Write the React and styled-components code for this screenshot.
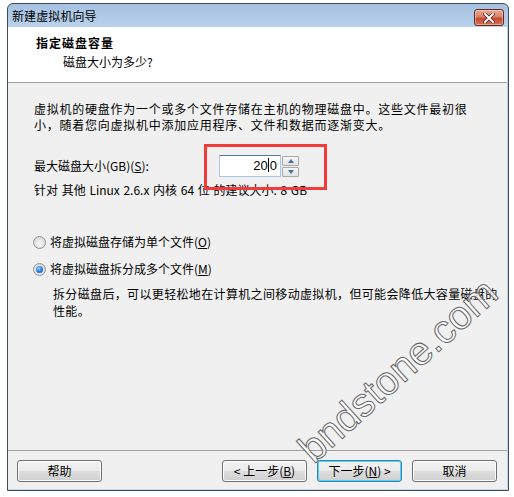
import React from "react";
import styled, { createGlobalStyle } from "styled-components";

const Global = createGlobalStyle`
  html, body { margin: 0; padding: 0; background: #ffffff; }
  body {
    font-family: "Noto Sans CJK SC", "Liberation Sans", sans-serif;
    font-size: 12px;
    color: #000;
  }
`;

const Page = styled.div`
  width: 514px;
  height: 497px;
  padding: 3px 0 0 7px;
  box-sizing: border-box;
  overflow: hidden;
`;

const Window = styled.div`
  position: relative;
  width: 502px;
  height: 488px;
  box-sizing: border-box;
  border: 1px solid #3f4a57;
  border-radius: 6px 6px 0 0;
  background: linear-gradient(180deg, #a6c1e1 0px, #bad2ec 24px, #c4d9f0 100%);
  display: flex;
  flex-direction: column;
  padding-bottom: 1px;
  overflow: hidden;
`;

const TitleBar = styled.div`
  height: 23px;
  flex: none;
  display: flex;
  align-items: center;
  justify-content: space-between;
  padding: 0 4px 0 4px;
`;

const Title = styled.span`
  font-size: 12px;
  line-height: 14px;
  color: #000;
  letter-spacing: 0.1px;
`;

const CloseButton = styled.div`
  width: 30px;
  height: 17px;
  box-sizing: border-box;
  border: 1px solid #5e2a22;
  border-radius: 3px;
  background: linear-gradient(180deg, #e9ab99 0%, #d9806a 45%, #c44b31 55%, #d4735c 100%);
  display: flex;
  align-items: center;
  justify-content: center;
  margin-top: 4px;
  box-shadow: inset 0 0 0 1px rgba(255, 220, 210, 0.5);
`;

const Client = styled.div`
  flex: 1;
  display: flex;
  flex-direction: column;
  background: #f0f0f0;
  margin: 0 1px 0 0;
`;

const Header = styled.div`
  height: 55px;
  flex: none;
  background: #ffffff;
  border-bottom: 1px solid #a0a0a0;
  box-sizing: content-box;
  padding: 0 0 0 28px;
`;

const HeaderTitle = styled.div`
  font-weight: bold;
  font-size: 12px;
  line-height: 16px;
  padding-top: 8px;
  letter-spacing: 1px;
`;

const HeaderSub = styled.div`
  font-size: 12px;
  line-height: 16px;
  padding: 3px 0 0 27px;
`;

const Body = styled.div`
  flex: 1;
  padding: 18px 0 0 26px;
  display: flex;
  flex-direction: column;
`;

const Paragraph = styled.p`
  margin: 0;
  font-size: 12px;
  letter-spacing: 0.75px;
  line-height: 16px;
  width: 440px;
`;

const SizeRow = styled.div`
  margin-top: 22px;
  height: 22px;
  display: flex;
  align-items: center;
`;

const Label = styled.span`
  width: 185px;
  font-size: 12px;
  line-height: 16px;
  u { text-decoration: underline; }
`;

const SpinWrap = styled.div`
  display: flex;
  align-items: stretch;
  height: 22px;
`;

const NumberBox = styled.div`
  width: 62px;
  box-sizing: border-box;
  border: 1px solid #a9c6e2;
  border-top-color: #4d7bab;
  background: #fff;
  text-align: right;
  padding-right: 3px;
  font-family: "Liberation Sans", "Noto Sans", sans-serif;
  font-size: 13px;
  line-height: 20px;
`;

const Caret = styled.span`
  display: inline-block;
  width: 1px;
  height: 14px;
  background: #000;
  vertical-align: -2px;
  margin: 0 0.5px;
`;

const SpinButtons = styled.div`
  width: 17px;
  display: flex;
  flex-direction: column;
  gap: 1px;
  padding: 1px 0 0 1px;
`;

const SpinBtn = styled.div`
  flex: 1;
  box-sizing: border-box;
  border: 1px solid #a8a8a8;
  border-radius: 1px;
  background: linear-gradient(180deg, #f6f6f6, #e3e3e3);
  display: flex;
  align-items: center;
  justify-content: center;
  &::after {
    content: "";
    width: 0;
    height: 0;
    border-left: 3.5px solid transparent;
    border-right: 3.5px solid transparent;
    ${(p) =>
      p.$up
        ? "border-bottom: 4px solid #4b6ea3;"
        : "border-top: 4px solid #4b6ea3;"}
  }
`;

const Highlight = styled.div`
  position: absolute;
  left: 196px;
  top: 140px;
  width: 123px;
  height: 46px;
  box-sizing: border-box;
  border: 3px solid #f23c3c;
  pointer-events: none;
`;

const Hint = styled.div`
  margin-top: 5px;
  font-size: 12px;
  line-height: 16px;
  word-spacing: 1px;
`;

const RadioRow = styled.label`
  display: flex;
  align-items: center;
  margin-top: ${(p) => p.$gap}px;
  margin-left: -1px;
  height: 16px;
  font-size: 12px;
  line-height: 16px;
  gap: 4px;
  u { text-decoration: underline; }
`;

const RadioDot = styled.span`
  width: 13px;
  height: 13px;
  box-sizing: border-box;
  border-radius: 50%;
  border: 1px solid #8f8f8f;
  background: radial-gradient(circle at 50% 60%, #f8f8f8 0%, #e0e0e0 60%, #cfcfcf 100%);
  display: flex;
  align-items: center;
  justify-content: center;
  &::after {
    content: "";
    width: 7px;
    height: 7px;
    border-radius: 50%;
    display: ${(p) => (p.$checked ? "block" : "none")};
    background: radial-gradient(circle at 40% 35%, #9fd2ff 0%, #2f86df 45%, #0b4ea2 100%);
  }
`;

const Description = styled.p`
  margin: 8px 0 0 19px;
  font-size: 12px;
  line-height: 17px;
  letter-spacing: 0.35px;
  width: 448px;
`;

const Footer = styled.div`
  flex: none;
  border-top: 1px solid #a0a0a0;
  padding: 9px 10px 7px 9px;
  display: flex;
  align-items: center;
  gap: 10px;
`;

const Spacer = styled.div`
  flex: 1;
`;

const Button = styled.button`
  width: 85px;
  height: 22px;
  box-sizing: border-box;
  border: 1px solid ${(p) => (p.$default ? "#3c7fb1" : "#707070")};
  border-radius: 3px;
  background: linear-gradient(180deg, #f2f2f2 0%, #ebebeb 50%, #dddddd 51%, #cfcfcf 100%);
  box-shadow: inset 0 0 0 1px ${(p) => (p.$default ? "#48d8fb" : "#fcfcfc")};
  font-family: "Noto Sans CJK SC", "Liberation Sans", sans-serif;
  font-size: 12px;
  line-height: 16px;
  color: #000;
  padding: 0;
  u { text-decoration: underline; }
`;

const Watermark = styled.div`
  position: absolute;
  left: 264px;
  top: 346px;
  transform: rotate(-42deg);
  transform-origin: center;
  font-family: "Liberation Sans", Arial, sans-serif;
  font-size: 40px;
  line-height: 40px;
  color: rgba(255, 255, 255, 0.85);
  -webkit-text-stroke: 1px #666666;
  white-space: nowrap;
  pointer-events: none;
`;

function CloseGlyph() {
  return (
    <svg width="12" height="10" viewBox="0 0 12 10">
      <path
        d="M2 1 L10 9 M10 1 L2 9"
        stroke="#5a1f16"
        strokeWidth="3.4"
        strokeLinecap="square"
      />
      <path
        d="M2 1 L10 9 M10 1 L2 9"
        stroke="#ffffff"
        strokeWidth="2"
        strokeLinecap="square"
      />
    </svg>
  );
}

export default function App() {
  return (
    <>
      <Global />
      <Page>
        <Window>
          <TitleBar>
            <Title>新建虚拟机向导</Title>
            <CloseButton>
              <CloseGlyph />
            </CloseButton>
          </TitleBar>
          <Client>
            <Header>
              <HeaderTitle>指定磁盘容量</HeaderTitle>
              <HeaderSub>磁盘大小为多少?</HeaderSub>
            </Header>
            <Body>
              <Paragraph>
                虚拟机的硬盘作为一个或多个文件存储在主机的物理磁盘中。这些文件最初很小，随着您向虚拟机中添加应用程序、文件和数据而逐渐变大。
              </Paragraph>
              <SizeRow>
                <Label>
                  最大磁盘大小(GB)(<u>S</u>):
                </Label>
                <SpinWrap>
                  <NumberBox>
                    20
                    <Caret />0
                  </NumberBox>
                  <SpinButtons>
                    <SpinBtn $up />
                    <SpinBtn />
                  </SpinButtons>
                </SpinWrap>
              </SizeRow>
              <Hint>针对 其他 Linux 2.6.x 内核 64 位 的建议大小: 8 GB</Hint>
              <RadioRow $gap={36}>
                <RadioDot />
                <span>
                  将虚拟磁盘存储为单个文件(<u>O</u>)
                </span>
              </RadioRow>
              <RadioRow $gap={11}>
                <RadioDot $checked />
                <span>
                  将虚拟磁盘拆分成多个文件(<u>M</u>)
                </span>
              </RadioRow>
              <Description>
                拆分磁盘后，可以更轻松地在计算机之间移动虚拟机，但可能会降低大容量磁盘的性能。
              </Description>
            </Body>
            <Footer>
              <Button>帮助</Button>
              <Spacer />
              <Button>
                &lt; 上一步(<u>B</u>)
              </Button>
              <Button $default>
                下一步(<u>N</u>) &gt;
              </Button>
              <Button>取消</Button>
            </Footer>
          </Client>
          <Highlight />
          <Watermark>bndstone.com</Watermark>
        </Window>
      </Page>
    </>
  );
}
